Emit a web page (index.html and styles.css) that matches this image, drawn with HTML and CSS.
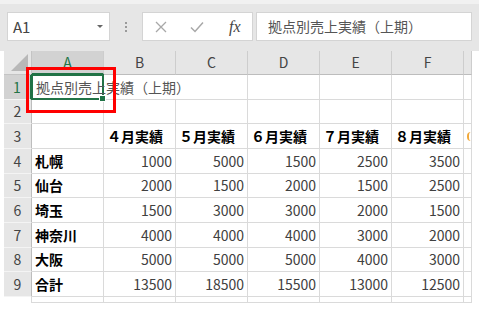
FILE: index.html
```html
<!DOCTYPE html>
<html lang="ja">
<head>
    <meta charset="UTF-8">
    <title>拠点別売上実績</title>
    <link rel="stylesheet" href="styles.css">
</head>
<body>
    <div class="toolbar">
        <div class="name-box">
            <span>A1</span>
            <span class="drop"></span>
        </div>
        <div class="grip"><i></i><i></i><i></i></div>
        <div class="fx-buttons">
            <svg width="12" height="12" viewBox="0 0 12 12"><path d="M1 1 L11 11 M11 1 L1 11" stroke="#a8a8a8" stroke-width="1.3" fill="none"/></svg>
            <svg width="14" height="12" viewBox="0 0 14 12"><path d="M1 6.5 L5 10.5 L13 1.5" stroke="#a8a8a8" stroke-width="1.5" fill="none"/></svg>
            <span class="fx">fx</span>
        </div>
        <div class="formula">拠点別売上実績（上期）</div>
    </div>

    <div class="sheet">
        <div class="corner"><span></span></div>
        <div class="col sel">A</div>
        <div class="col">B</div>
        <div class="col">C</div>
        <div class="col">D</div>
        <div class="col">E</div>
        <div class="col">F</div>
        <div class="col"></div>

        <div class="row sel">1</div>
        <div class="cell active"><span class="over">拠点別売上実績（上期）</span></div>
        <div class="cell flow"></div>
        <div class="cell"></div><div class="cell"></div><div class="cell"></div><div class="cell"></div><div class="cell"></div>

        <div class="row">2</div>
        <div class="cell"></div><div class="cell"></div><div class="cell"></div><div class="cell"></div><div class="cell"></div><div class="cell"></div><div class="cell"></div>

        <div class="row">3</div>
        <div class="cell"></div>
        <div class="cell b">４月実績</div>
        <div class="cell b">５月実績</div>
        <div class="cell b">６月実績</div>
        <div class="cell b">７月実績</div>
        <div class="cell b">８月実績</div>
        <div class="cell"><span class="peek"></span></div>

        <div class="row">4</div>
        <div class="cell b">札幌</div>
        <div class="cell n">1000</div><div class="cell n">5000</div><div class="cell n">1500</div><div class="cell n">2500</div><div class="cell n">3500</div><div class="cell"></div>

        <div class="row">5</div>
        <div class="cell b">仙台</div>
        <div class="cell n">2000</div><div class="cell n">1500</div><div class="cell n">2000</div><div class="cell n">1500</div><div class="cell n">2500</div><div class="cell"></div>

        <div class="row">6</div>
        <div class="cell b">埼玉</div>
        <div class="cell n">1500</div><div class="cell n">3000</div><div class="cell n">3000</div><div class="cell n">2000</div><div class="cell n">1500</div><div class="cell"></div>

        <div class="row">7</div>
        <div class="cell b">神奈川</div>
        <div class="cell n">4000</div><div class="cell n">4000</div><div class="cell n">4000</div><div class="cell n">3000</div><div class="cell n">2000</div><div class="cell"></div>

        <div class="row">8</div>
        <div class="cell b">大阪</div>
        <div class="cell n">5000</div><div class="cell n">5000</div><div class="cell n">5000</div><div class="cell n">4000</div><div class="cell n">3000</div><div class="cell"></div>

        <div class="row">9</div>
        <div class="cell b">合計</div>
        <div class="cell n">13500</div><div class="cell n">18500</div><div class="cell n">15500</div><div class="cell n">13000</div><div class="cell n">12500</div><div class="cell"></div>

        <div class="row blank"></div>
        <div class="cell"></div><div class="cell"></div><div class="cell"></div><div class="cell"></div><div class="cell"></div><div class="cell"></div><div class="cell"></div>

        <!-- annotation -->
        <div class="mark"></div>
    </div>
</body>
</html>
```

FILE: styles.css
```css
body {
    margin: 0;
    width: 479px;
    height: 310px;
    overflow: hidden;
    background: #ffffff;
    font-family: "Noto Sans CJK JP", "Noto Sans", sans-serif;
    font-size: 14px;
    color: #404040;
}

/* formula bar */
.toolbar {
    display: flex;
    height: 51px;
    box-sizing: border-box;
    padding: 8px 7px 10px 7px;
    background: #e6e6e6;
    border-top: 4px solid #f1f1f1;
}
.name-box {
    width: 103px;
    box-sizing: border-box;
    background: white;
    border: 1px solid #d4d4d4;
    display: flex;
    align-items: center;
    justify-content: space-between;
    padding: 0 6px 0 5px;
    font-size: 15px;
    color: #444;
}
.drop {
    width: 0;
    height: 0;
    border-left: 3px solid transparent;
    border-right: 3px solid transparent;
    border-top: 3px solid #666;
}
.grip {
    width: 32px;
    display: flex;
    flex-direction: column;
    align-items: center;
    justify-content: center;
    gap: 2px;
}
.grip i {
    width: 2px;
    height: 2px;
    background: #9a9a9a;
}
.fx-buttons {
    width: 111px;
    box-sizing: border-box;
    background: white;
    border: 1px solid #d4d4d4;
    display: flex;
    align-items: center;
    padding-left: 12px;
    gap: 23px;
}
.fx {
    font-family: "Liberation Serif", serif;
    font-style: italic;
    font-size: 16px;
    color: #444;
    margin-left: 2px;
}
.formula {
    flex: 1;
    margin-left: 3px;
    background: white;
    border: 1px solid #d4d4d4;
    padding-left: 11px;
    line-height: 27px;
    color: #555;
}

/* sheet grid */
.sheet {
    position: relative;
    margin-left: 4px;
    width: 468px;
    display: grid;
    grid-template-columns: 28px repeat(6, 72px) 8px;
    grid-template-rows: 24px repeat(9, 24.67px) 6px;
}
.corner {
    background: #e6e6e6;
    border-right: 1px solid #c4c4c4;
    border-bottom: 1px solid #c4c4c4;
    position: relative;
}
.corner span {
    position: absolute;
    right: 3px;
    bottom: 3px;
    width: 0;
    height: 0;
    border-left: 17px solid transparent;
    border-bottom: 17px solid #b8b8b8;
}
.col {
    background: #e6e6e6;
    border-right: 1px solid #cdcdcd;
    border-bottom: 1px solid #bdbdbd;
    text-align: center;
    line-height: 23px;
    color: #444;
    overflow: hidden;
}
.col.sel {
    background: #d2d2d2;
    color: #217346;
    border-bottom: 2px solid #217346;
}
.row {
    background: #e6e6e6;
    border-right: 1px solid #bdbdbd;
    border-bottom: 1px solid #f4f4f4;
    display: flex;
    align-items: center;
    justify-content: center;
    color: #444;
}
.row.sel {
    background: #d2d2d2;
    color: #217346;
    border-right: 2px solid #217346;
}
.row.blank {
    background: white;
    border-bottom: none;
    border-right: 1px solid #dadada;
}
.cell {
    border-right: 1px solid #dadada;
    border-bottom: 1px solid #dadada;
    display: flex;
    align-items: center;
    padding: 0 3px;
    white-space: nowrap;
    overflow: hidden;
    min-width: 0;
}
.cell.n {
    justify-content: flex-end;
}
.cell.b {
    font-weight: bold;
    color: #000;
}
.peek {
    flex: none;
    width: 4px;
    height: 9px;
    border-left: 2px solid #f2a93b;
    border-radius: 4px 0 0 4px;
}
.cell.flow {
    border-right: none;
}
.cell.active {
    overflow: visible;
    position: relative;
}
.over {
    position: relative;
    z-index: 1;
    padding-left: 1px;
    color: #555;
}
.cell.active::after {
    content: "";
    position: absolute;
    left: -1px;
    top: -1px;
    right: -1px;
    bottom: -1px;
    border: 2px solid #217346;
}
.cell.active::before {
    content: "";
    position: absolute;
    right: -3px;
    bottom: -3px;
    width: 5px;
    height: 5px;
    background: #217346;
    border: 1px solid white;
    z-index: 2;
}
.mark {
    position: absolute;
    left: 22px;
    top: 16px;
    width: 90px;
    height: 46px;
    box-sizing: border-box;
    border: 3px solid #ff0000;
    z-index: 3;
}
```
